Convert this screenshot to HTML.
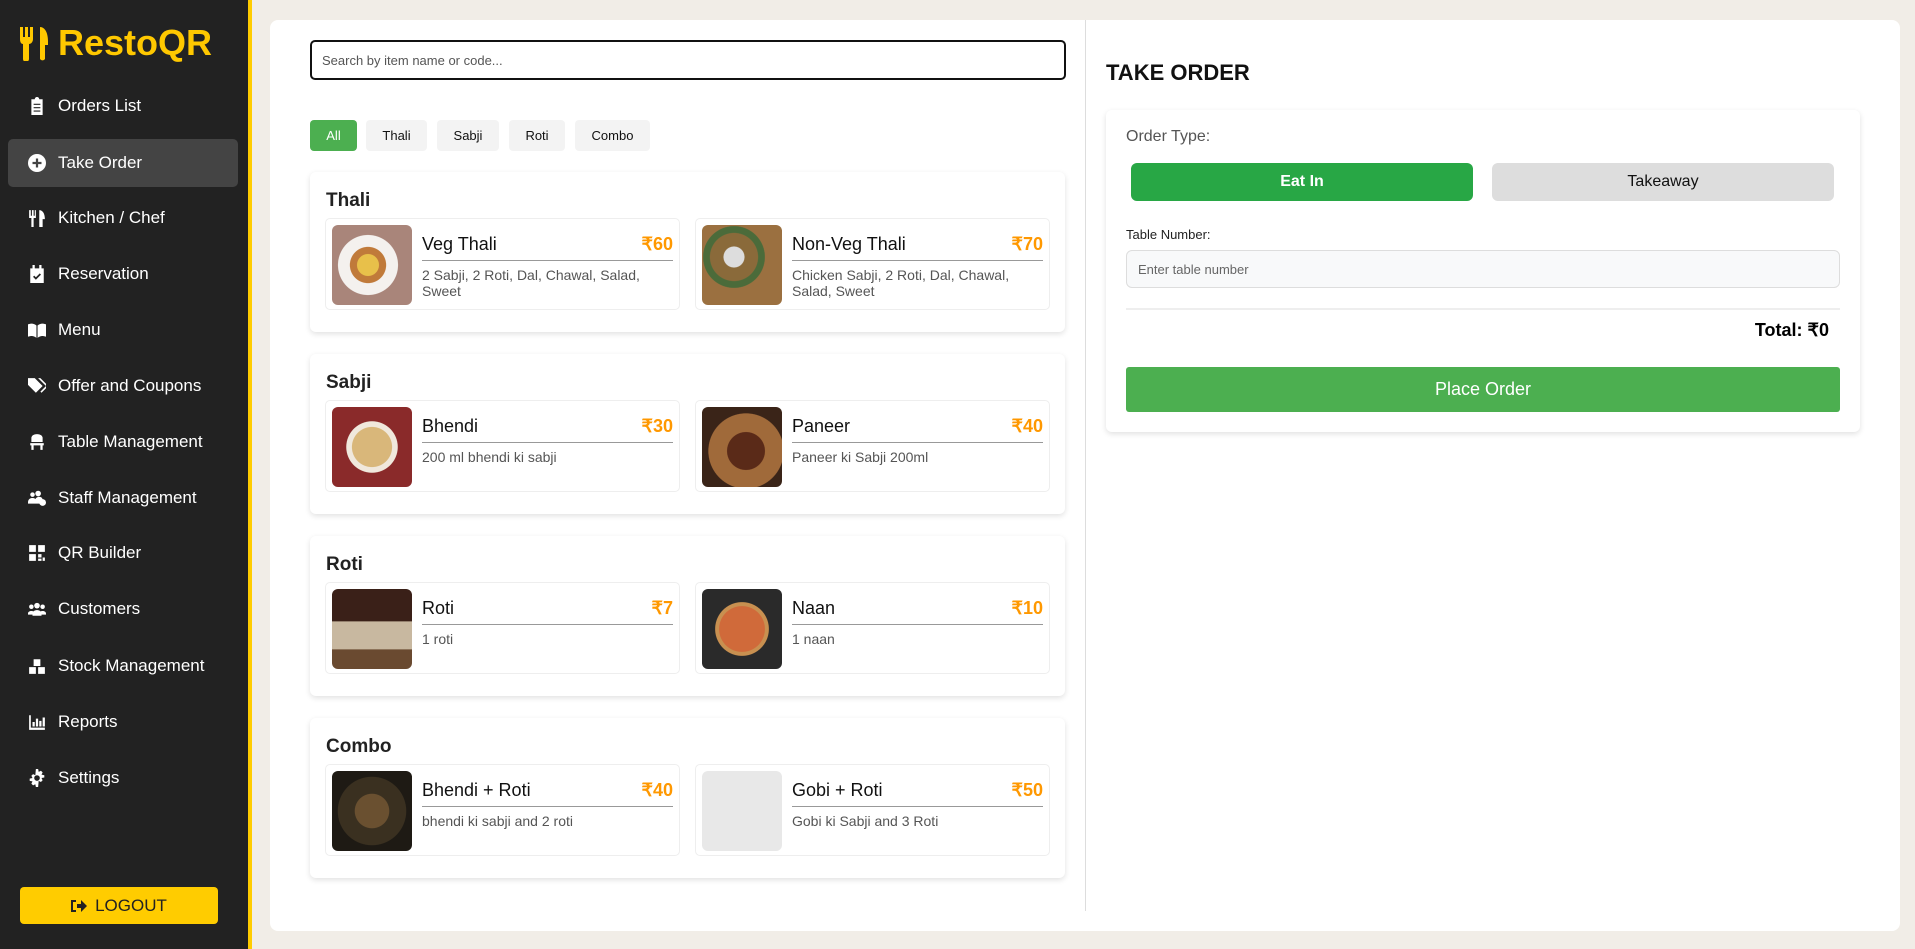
<!DOCTYPE html>
<html><head><meta charset="utf-8"><style>
*{box-sizing:border-box;margin:0;padding:0}
body{width:1915px;height:949px;overflow:hidden;font-family:"Liberation Sans",Arial,sans-serif;background:#f1ede7;position:relative}
.sb{position:absolute;left:0;top:0;width:252px;height:949px;background:#222;border-right:4px solid #ffcc00}
.logo{position:absolute;left:20px;top:22px;color:#ffc800;font-weight:bold;font-size:36px;display:flex;align-items:center;gap:8px}
.nav{position:absolute;left:8px;width:230px;height:48px;display:flex;align-items:center;color:#fff;font-size:17px;border-radius:5px}
.nav.act{background:#444}
.nav svg{position:absolute;left:20px;width:18px;height:18px;fill:#fff}
.nav span{position:absolute;left:50px}
.logout{position:absolute;left:20px;top:887px;width:198px;height:37px;background:#ffcc00;border-radius:4px;display:flex;align-items:center;justify-content:center;font-size:17px;color:#222;gap:8px}
.main{position:absolute;left:270px;top:20px;width:1630px;height:911px;background:#fff;border-radius:8px}
.div{position:absolute;left:1085px;top:20px;width:1px;height:891px;background:#ddd}
.search{position:absolute;left:310px;top:40px;width:756px;height:40px;border:2px solid #111;border-radius:5px;font-size:13px;color:#555;padding:11px 10px}
.chip{position:absolute;top:120px;height:31px;border-radius:4px;background:#f3f3f3;font-size:13px;display:flex;align-items:center;justify-content:center;color:#111}
.card{position:absolute;left:310px;width:755px;height:160px;background:#fff;border-radius:6px;box-shadow:0 2px 6px rgba(0,0,0,.12)}
.card h3{position:absolute;left:16px;top:18px;font-size:19px;color:#222}
.item{position:absolute;top:46px;width:355px;height:92px;border:1px solid #eee;border-radius:5px}
.img{position:absolute;left:6px;top:6px;width:80px;height:80px;border-radius:6px}
.nm{position:absolute;left:96px;top:15px;font-size:18px;color:#111}
.pr{position:absolute;right:6px;top:15px;font-size:18px;font-weight:bold;color:#ff9800}
.ln{position:absolute;left:96px;right:6px;top:41px;height:1px;background:#999}
.ds{position:absolute;left:96px;top:48px;right:20px;font-size:14px;color:#555;line-height:16px}
</style></head><body>
<div class="sb">
<div class="logo"><svg width="30" height="36" viewBox="0 0 30 36"><path fill="#ffc800" d="M0 2h3v10h2V2h3v10h2V2h3v12c0 3-2 5-4 5v15a3 3 0 0 1-6 0V19c-2 0-3-2-3-5z M20 2c5 0 8 6 8 14v4h-3v14a3 3 0 0 1-5 0z"/></svg>RestoQR</div>
<div class="nav" style="top:82px"><svg viewBox="0 0 16 16"><path d="M3 2h3a2 2 0 0 1 4 0h3v14H3zM5 6h6v1H5zm0 3h6v1H5zm0 3h6v1H5z" fill-rule="evenodd"/></svg><span>Orders List</span></div>
<div class="nav act" style="top:139px"><svg viewBox="0 0 16 16"><circle cx="8" cy="8" r="8"/><path d="M7 4h2v3h3v2H9v3H7V9H4V7h3z" fill="#444"/></svg><span>Take Order</span></div>
<div class="nav" style="top:194px"><svg viewBox="0 0 16 16"><path d="M1 1h1.5v5h1V1h1.5v5h1V1H7v7H5v8H3V8H1zM10 1c3 0 5 3 5 8h-2v7h-3z"/></svg><span>Kitchen / Chef</span></div>
<div class="nav" style="top:250px"><svg viewBox="0 0 16 16"><path d="M2 3h12v13H2zM4 0h2v4H4zm6 0h2v4h-2z"/><path d="M5 10l2 2 4-4" stroke="#222" stroke-width="1.5" fill="none"/></svg><span>Reservation</span></div>
<div class="nav" style="top:306px"><svg viewBox="0 0 16 16"><path d="M0 3c3-1 5-1 7.5 1v11C5 13 3 13 0 14zM16 3c-3-1-5-1-7.5 1v11c2.5-2 4.5-2 7.5-1z"/></svg><span>Menu</span></div>
<div class="nav" style="top:362px"><svg viewBox="0 0 16 16"><path d="M0 1h6l7 7-6 6-7-7zM9 1h2l7 7-6 6-1-1 5-5z"/></svg><span>Offer and Coupons</span></div>
<div class="nav" style="top:418px"><svg viewBox="0 0 16 16"><path d="M3 8V4a5 3 0 0 1 10 0v4zM2 9h12v2H2zm1 2h2v4H3zm8 0h2v4h-2z"/></svg><span>Table Management</span></div>
<div class="nav" style="top:474px"><svg viewBox="0 0 16 16"><circle cx="4" cy="5" r="2"/><circle cx="9" cy="4" r="2.5"/><path d="M0 12c0-3 2-4 4-4s3 1 3 2v3H0zm6 0c0-4 2-5 4-5s3 1 3 3v3H6z"/><circle cx="13" cy="12" r="3"/></svg><span>Staff Management</span></div>
<div class="nav" style="top:529px"><svg viewBox="0 0 16 16"><path d="M1 1h6v6H1zm8 0h6v6H9zM1 9h6v6H1zm8 0h3v3H9zm4 3h2v3h-2zm-4 1h3v2H9z"/></svg><span>QR Builder</span></div>
<div class="nav" style="top:585px"><svg viewBox="0 0 16 16"><circle cx="3" cy="6" r="2"/><circle cx="8" cy="5" r="2.5"/><circle cx="13" cy="6" r="2"/><path d="M0 12c0-3 6-3 6 0v1H0zm4 0c0-4 8-4 8 0v2H4zm6 0c0-3 6-3 6 0v1h-6z"/></svg><span>Customers</span></div>
<div class="nav" style="top:642px"><svg viewBox="0 0 16 16"><path d="M5 2h6v6H5zM1 9h6v6H1zm8 0h6v6H9z"/></svg><span>Stock Management</span></div>
<div class="nav" style="top:698px"><svg viewBox="0 0 16 16"><path d="M1 2h1.5v11H15v2H1zM4 8h2v4H4zm3-3h2v7H7zm3 2h2v5h-2zm3-3h2v8h-2z"/></svg><span>Reports</span></div>
<div class="nav" style="top:754px"><svg viewBox="0 0 16 16"><path d="M7 0h2l.5 2.5 2-1 1.5 1.5-1 2 2.5.5v2l-2.5.5 1 2-1.5 1.5-2-1L9 16H7l-.5-2.5-2 1L3 13l1-2L1.5 10.5v-2L4 8 3 6l1.5-1.5 2 1z"/><circle cx="8" cy="8" r="2.5" fill="#222"/></svg><span>Settings</span></div>
<div class="logout"><svg width="16" height="14" viewBox="0 0 16 14"><path d="M0 1h5v2H2v8h3v2H0zM6 5h4V1l6 6-6 6V9H6z" fill="#222"/></svg>LOGOUT</div>
</div>
<div class="main"></div>
<div class="div"></div>
<div class="search">Search by item name or code...</div>
<div class="chip" style="left:310px;width:47px;background:#4caf50;color:#fff">All</div>
<div class="chip" style="left:366px;width:61px">Thali</div>
<div class="chip" style="left:437px;width:62px">Sabji</div>
<div class="chip" style="left:509px;width:56px">Roti</div>
<div class="chip" style="left:575px;width:75px">Combo</div>

<div class="card" style="top:172px"><h3>Thali</h3>
<div class="item" style="left:15px"><div class="img" style="background:radial-gradient(circle at 45% 50%,#e8c04a 0 18%,#c07a3a 19% 30%,#f4f1ee 31% 50%,#a9857a 51%)"></div><div class="nm">Veg Thali</div><div class="pr">₹60</div><div class="ln"></div><div class="ds">2 Sabji, 2 Roti, Dal, Chawal, Salad, Sweet</div></div>
<div class="item" style="left:385px"><div class="img" style="background:radial-gradient(circle at 40% 40%,#ddd 0 15%,#8a6a3a 16% 35%,#4b6b3a 36% 45%,#9b7040 46%)"></div><div class="nm">Non-Veg Thali</div><div class="pr">₹70</div><div class="ln"></div><div class="ds">Chicken Sabji, 2 Roti, Dal, Chawal, Salad, Sweet</div></div>
</div>
<div class="card" style="top:354px"><h3>Sabji</h3>
<div class="item" style="left:15px"><div class="img" style="background:radial-gradient(circle,#d9b77a 0 35%,#f0e8dc 36% 45%,#8a2a2a 46%)"></div><div class="nm">Bhendi</div><div class="pr">₹30</div><div class="ln"></div><div class="ds">200 ml bhendi ki sabji</div></div>
<div class="item" style="left:385px"><div class="img" style="background:radial-gradient(ellipse at 55% 55%,#5a2a18 0 30%,#a06a3a 31% 60%,#3a2418 61%)"></div><div class="nm">Paneer</div><div class="pr">₹40</div><div class="ln"></div><div class="ds">Paneer ki Sabji 200ml</div></div>
</div>
<div class="card" style="top:536px"><h3>Roti</h3>
<div class="item" style="left:15px"><div class="img" style="background:linear-gradient(#3a2018 0 40%,#c8b8a0 41% 75%,#6a4a30 76%)"></div><div class="nm">Roti</div><div class="pr">₹7</div><div class="ln"></div><div class="ds">1 roti</div></div>
<div class="item" style="left:385px"><div class="img" style="background:radial-gradient(circle,#d06a3a 0 40%,#c89050 41% 47%,#2a2a2a 48%)"></div><div class="nm">Naan</div><div class="pr">₹10</div><div class="ln"></div><div class="ds">1 naan</div></div>
</div>
<div class="card" style="top:718px"><h3>Combo</h3>
<div class="item" style="left:15px"><div class="img" style="background:radial-gradient(circle at 50% 50%,#6a5030 0 30%,#3a3020 31% 60%,#1e1a14 61%)"></div><div class="nm">Bhendi + Roti</div><div class="pr">₹40</div><div class="ln"></div><div class="ds">bhendi ki sabji and 2 roti</div></div>
<div class="item" style="left:385px"><div class="img" style="background:#e8e8e8"></div><div class="nm">Gobi + Roti</div><div class="pr">₹50</div><div class="ln"></div><div class="ds">Gobi ki Sabji and 3 Roti</div></div>
</div>

<div style="position:absolute;left:1106px;top:60px;font-size:22px;font-weight:bold;color:#111">TAKE ORDER</div>
<div style="position:absolute;left:1106px;top:110px;width:754px;height:322px;background:#fff;border-radius:6px;box-shadow:0 2px 6px rgba(0,0,0,.12)"></div>
<div style="position:absolute;left:1126px;top:128px;font-size:16px;color:#555">Order Type:</div>
<div style="position:absolute;left:1131px;top:163px;width:342px;height:38px;background:#28a745;border-radius:6px;color:#fff;font-weight:bold;font-size:16px;display:flex;align-items:center;justify-content:center">Eat In</div>
<div style="position:absolute;left:1492px;top:163px;width:342px;height:38px;background:#ddd;border-radius:6px;color:#111;font-size:16px;display:flex;align-items:center;justify-content:center">Takeaway</div>
<div style="position:absolute;left:1126px;top:227px;font-size:13px;color:#222">Table Number:</div>
<div style="position:absolute;left:1126px;top:250px;width:714px;height:38px;background:#f8f9fa;border:1px solid #ddd;border-radius:6px;font-size:13px;color:#666;padding:11px 11px">Enter table number</div>
<div style="position:absolute;left:1126px;top:308px;width:714px;height:2px;background:#eee"></div>
<div style="position:absolute;right:86px;top:320px;font-size:18px;font-weight:bold;color:#000">Total: ₹0</div>
<div style="position:absolute;left:1126px;top:367px;width:714px;height:45px;background:#4caf50;border-radius:3px;color:#fff;font-size:18px;display:flex;align-items:center;justify-content:center">Place Order</div>
</body></html>
